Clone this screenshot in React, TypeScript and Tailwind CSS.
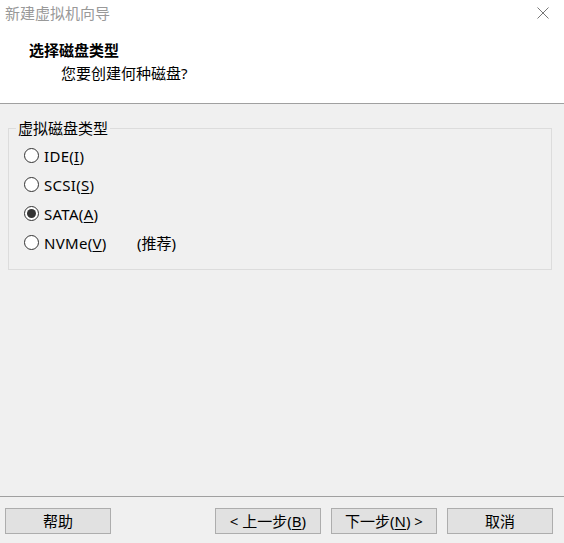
import React, { useState } from 'react';

type DiskOption = { key: string; label: string; mnemonic: string; note?: string };

const OPTIONS: DiskOption[] = [
  { key: 'ide', label: 'IDE', mnemonic: 'I' },
  { key: 'scsi', label: 'SCSI', mnemonic: 'S' },
  { key: 'sata', label: 'SATA', mnemonic: 'A' },
  { key: 'nvme', label: 'NVMe', mnemonic: 'V', note: '(推荐)' },
];

function Radio({ checked }: { checked: boolean }) {
  return (
    <span className="flex h-[15px] w-[15px] shrink-0 items-center justify-center rounded-full border border-[#333333] bg-white">
      {checked && <span className="h-[9px] w-[9px] rounded-full bg-[#333333]" />}
    </span>
  );
}

function DialogButton({ children }: { children: React.ReactNode }) {
  return (
    <button className="flex h-[26px] w-[106px] items-center justify-center border border-[#adadad] bg-[#e1e1e1] text-[15px] leading-[20px] text-black">
      {children}
    </button>
  );
}

export default function App() {
  const [selected, setSelected] = useState('sata');

  return (
    <div className="flex h-[543px] w-[564px] flex-col overflow-hidden bg-[#f0f0f0] font-['Noto_Sans','Noto_Sans_CJK_SC',sans-serif] text-[15px] leading-[20px] text-black">
      {/* Header */}
      <div className="h-[104px] shrink-0 border-b border-[#a0a0a0] bg-white">
        <div className="flex h-[26px] items-center justify-between pl-[5px] pr-[15px]">
          <span className="text-[#999999]">新建虚拟机向导</span>
          <svg width="12" height="12" viewBox="0 0 12 12" aria-hidden="true">
            <path d="M0.5 0.5 L11.5 11.5 M11.5 0.5 L0.5 11.5" stroke="#777777" strokeWidth="1" fill="none" />
          </svg>
        </div>
        <div className="mt-[14px] pl-[29px] font-bold">选择磁盘类型</div>
        <div className="mt-[3px] pl-[61px]">您要创建何种磁盘?</div>
      </div>

      {/* Disk type group */}
      <fieldset className="mx-[8px] mt-[14px] w-[544px] border border-[#dcdcdc] pb-[12px] pl-[15px] pt-[3px]">
        <legend className="ml-[-8px] px-[2px] leading-[20px]">虚拟磁盘类型</legend>
        {OPTIONS.map((o) => (
          <div
            key={o.key}
            className="flex h-[29px] cursor-default items-center"
            onClick={() => setSelected(o.key)}
          >
            <Radio checked={selected === o.key} />
            <span className="ml-[5px] inline-block w-[93px] tracking-[0.3px]">
              {o.label}(<span className="underline underline-offset-2">{o.mnemonic}</span>)
            </span>
            {o.note && <span>{o.note}</span>}
          </div>
        ))}
      </fieldset>

      <div className="flex-1" />

      {/* Footer */}
      <div className="flex shrink-0 items-center border-t border-[#a0a0a0] pb-[9px] pl-[5px] pr-[11px] pt-[11px]">
        <DialogButton>帮助</DialogButton>
        <div className="flex-1" />
        <div className="flex gap-[10px]">
          <DialogButton>
            &lt; 上一步(<span className="underline underline-offset-2">B</span>)
          </DialogButton>
          <DialogButton>
            下一步(<span className="underline underline-offset-2">N</span>) &gt;
          </DialogButton>
          <DialogButton>取消</DialogButton>
        </div>
      </div>
    </div>
  );
}
